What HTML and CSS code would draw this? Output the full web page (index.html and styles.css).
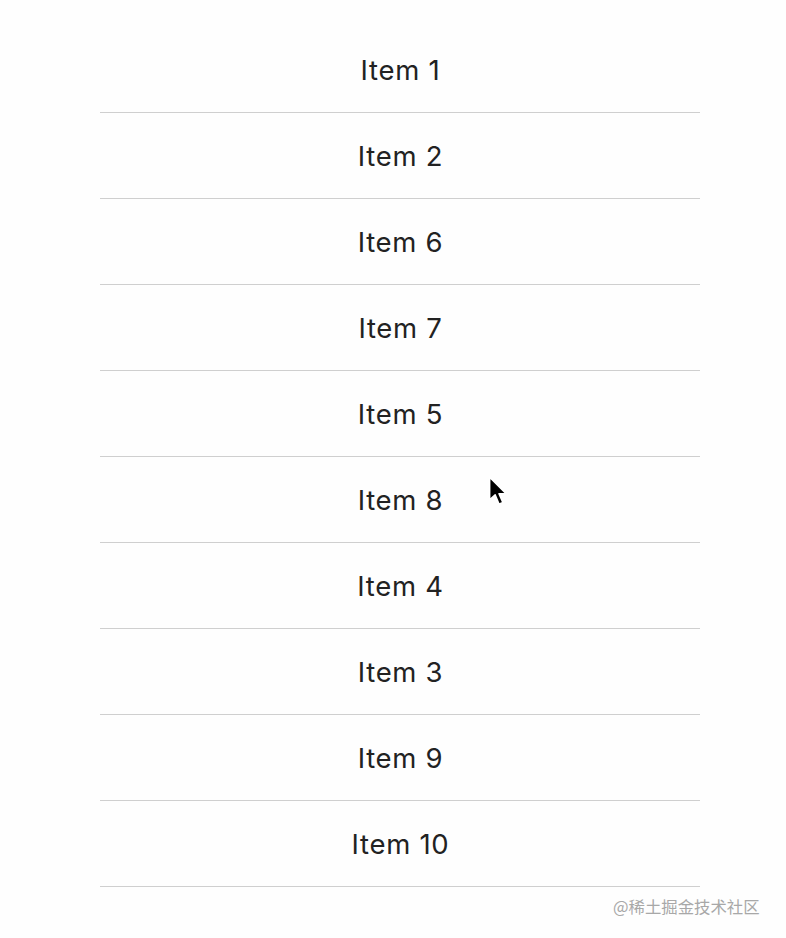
FILE: index.html
```html
<!DOCTYPE html>
<html lang="zh">
<head>
<meta charset="utf-8">
<link rel="stylesheet" href="styles.css">
</head>
<body>
<ul class="list">
  <li class="item">Item 1</li>
  <li class="item">Item 2</li>
  <li class="item">Item 6</li>
  <li class="item">Item 7</li>
  <li class="item">Item 5</li>
  <li class="item">Item 8</li>
  <li class="item">Item 4</li>
  <li class="item">Item 3</li>
  <li class="item">Item 9</li>
  <li class="item">Item 10</li>
</ul>
<svg class="cursor" width="22" height="34" viewBox="0 0 20 30">
  <path d="M1.5 1.5 L1.5 22 L6.5 17.5 L10 26 L13.5 24.5 L10 16.5 L16.5 16.5 Z" fill="#000" stroke="#fff" stroke-width="1.4" stroke-linejoin="round"/>
</svg>
<div class="watermark">@稀土掘金技术社区</div>
</body>
</html>
```
FILE: styles.css
```css
html, body {
  margin: 0;
  padding: 0;
  background: #fefefe;
}
body {
  width: 786px;
  height: 938px;
  position: relative;
  overflow: hidden;
  font-family: Inter, "Noto Sans", sans-serif;
}
.list {
  list-style: none;
  margin: 27px 0 0 100px;
  padding: 0;
  width: 600px;
}
.item {
  height: 85px;
  border-bottom: 1px solid #cfcfcf;
  display: flex;
  align-items: center;
  justify-content: center;
  padding-left: 1px;
  font-size: 27.5px;
  letter-spacing: 0.7px;
  color: #222;
}
.cursor {
  position: absolute;
  left: 488px;
  top: 475px;
}
.watermark {
  position: absolute;
  left: 613px;
  top: 894px;
  font-size: 16.4px;
  line-height: 24px;
  color: #a8a8a8;
  font-family: "Noto Sans CJK SC", sans-serif;
}
```
